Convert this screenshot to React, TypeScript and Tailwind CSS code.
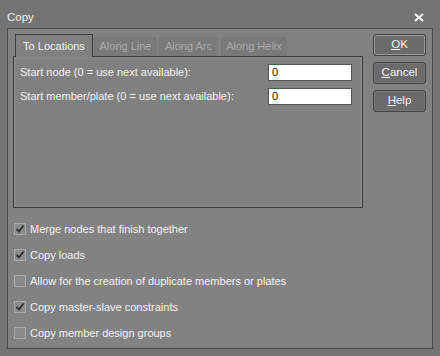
import React from "react";

const font = { fontFamily: '"Liberation Sans", Arial, sans-serif' };

function Check({ checked }: { checked: boolean }) {
  return (
    <div className="w-[12px] h-[12px] border border-[#a9a9a9] bg-[#8a8a8a] flex items-center justify-center shrink-0">
      {checked && (
        <svg width="10" height="10" viewBox="0 0 10 10">
          <path d="M1.5 5 L4 7.5 L8.5 1.5" stroke="#2e2e2e" strokeWidth="1.8" fill="none" />
        </svg>
      )}
    </div>
  );
}

function Btn({ children, def }: { children: React.ReactNode; def?: boolean }) {
  return (
    <div
      className={`w-[53px] h-[22px] rounded-[3px] border border-[#444] bg-[#6b6b6b] flex items-center justify-center text-[11.5px] text-[#f2f2f2] ${
        def ? "shadow-[inset_0_0_0_1px_#9a9a9a]" : "shadow-[inset_0_0_0_1px_#777]"
      }`}
    >
      {children}
    </div>
  );
}

export default function App() {
  const checks: [string, boolean][] = [
    ["Merge nodes that finish together", true],
    ["Copy loads", true],
    ["Allow for the creation of duplicate members or plates", false],
    ["Copy master-slave constraints", true],
    ["Copy member design groups", false],
  ];
  return (
    <div className="w-[440px] h-[356px] bg-[#747474] flex flex-col text-[11px] text-[#f2f2f2]" style={font}>
      <div className="h-[28px] flex items-center justify-between pl-[7px] pr-[16px]">
        <span className="text-[#f0f0f0] mt-[8px] text-[11.5px]">Copy</span>
        <svg width="10" height="9" viewBox="0 0 10 9" className="mt-[6px]">
          <path d="M1 1 L9 8 M9 1 L1 8" stroke="#f4f4f4" strokeWidth="2.2" />
        </svg>
      </div>
      <div className="ml-[7px] w-[426px] h-[321px] border border-[#4c4c4c] bg-[#828282] flex flex-col">
        <div className="flex pt-[5px] pl-[5px]">
          <div className="w-[350px] flex flex-col">
            <div className="h-[22px] flex items-end">
              <div className="ml-[2px] w-[78px] h-[23px] -mb-px relative z-10 border-l border-t border-r border-[#3e3e3e] bg-[#808080] flex items-center justify-center text-[#f2f2f2]">
                To Locations
              </div>
              <div className="ml-px w-[63px] h-[19px] bg-[#7a7a7a] flex items-center justify-center text-[#a8a8a8]">
                Along Line
              </div>
              <div className="ml-[2px] w-[59px] h-[19px] bg-[#7a7a7a] flex items-center justify-center text-[#a8a8a8]">
                Along Arc
              </div>
              <div className="ml-[3px] w-[66px] h-[19px] bg-[#7a7a7a] flex items-center justify-center text-[#a8a8a8]">
                Along Helix
              </div>
            </div>
            <div className="h-[152px] border border-[#3e3e3e] bg-[#808080]">
              <div className="h-full border-2 border-[#868686] flex flex-col pl-[4px] pt-[5px] gap-[7px]">
                <div className="flex items-center justify-between pr-[8px] h-[17px]">
                  <span>Start node (0 = use next available):</span>
                  <div className="w-[84px] h-[17px] bg-white border border-[#555] text-[#111] pl-[3px] flex items-center">0</div>
                </div>
                <div className="flex items-center justify-between pr-[8px] h-[17px]">
                  <span>Start member/plate (0 = use next available):</span>
                  <div className="w-[84px] h-[17px] bg-white border border-[#555] text-[#111] pl-[3px] flex items-center">0</div>
                </div>
              </div>
            </div>
          </div>
          <div className="ml-[10px] flex flex-col gap-[6px]">
            <Btn def>
              <span className="underline">O</span>K
            </Btn>
            <Btn>
              <span className="underline">C</span>ancel
            </Btn>
            <Btn>
              <span className="underline">H</span>elp
            </Btn>
          </div>
        </div>
        <div className="flex flex-col mt-[8px] pl-[6px]">
          {checks.map(([label, c]) => (
            <div key={label} className="h-[26px] flex items-center gap-[4px]">
              <Check checked={c} />
              <span>{label}</span>
            </div>
          ))}
        </div>
      </div>
    </div>
  );
}
